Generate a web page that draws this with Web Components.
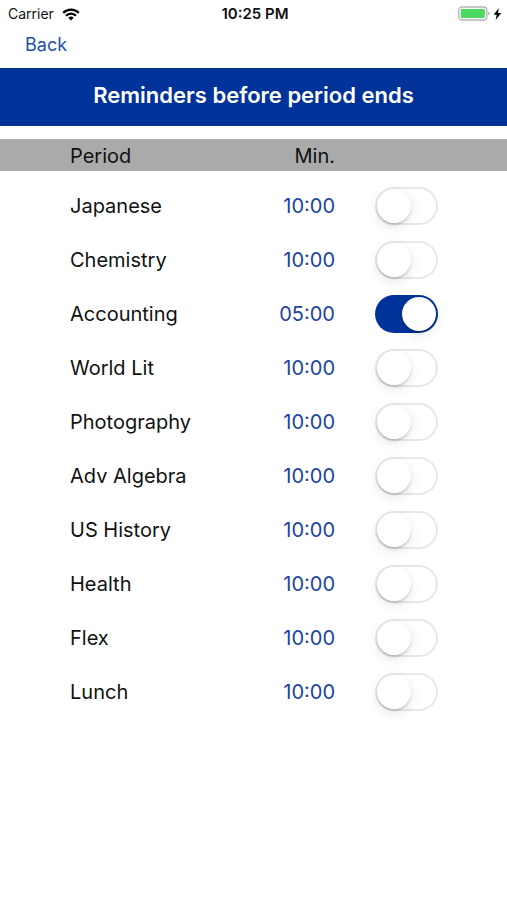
<!DOCTYPE html>
<html lang="en">
<head>
<meta charset="utf-8">
<meta name="viewport" content="width=device-width, initial-scale=1">
<title>Reminders</title>
<style>
    body{
        margin: 0;
        background: #fff;
        color: #111;
        font-family: Inter, "Liberation Sans", sans-serif;
        font-size: 20px;
        line-height: 24px;
        --brand: #003399;
    }
</style>
</head>
<body>
<reminders-page>
    <status-bar carrier="Carrier" time="10:25 PM"></status-bar>
    <nav-bar>Back</nav-bar>
    <page-banner>Reminders before period ends</page-banner>
    <reminder-table></reminder-table>
</reminders-page>

<script>
// fills a shadow root from a html string
function render(el, html){
    const template = document.createElement("template");
    template.innerHTML = html;
    el.attachShadow({mode: "open"});
    el.shadowRoot.appendChild(template.content.cloneNode(true));
}

//page shell
class RemindersPage extends HTMLElement {
    constructor(){
        super();
        render(this, `
        <style>
            :host{
                display: flex;
                flex-direction: column;
            }
        </style>
        <slot></slot>
        `);
    }
}

//carrier, clock and battery
class StatusBar extends HTMLElement {
    constructor(){
        super();
        render(this, `
        <style>
            :host{
                display: grid;
                grid-template-columns: 1fr auto 1fr;
                align-items: center;
                height: 28px;
                padding: 0 5px 0 8px;
                font-size: 14px;
                line-height: 16px;
            }
            .left, .right{
                display: flex;
                align-items: center;
                gap: 8px;
            }
            .right{
                justify-content: flex-end;
                gap: 3px;
            }
            .time{
                font-size: 15px;
                font-weight: 600;
            }
            svg{
                display: block;
            }
        </style>
        <div class="left">
            <span class="carrier"></span>
            <svg width="18" height="13" viewBox="0 0 18 13" aria-hidden="true">
                <g fill="none" stroke="#000" stroke-width="2.3">
                    <path d="M1.2 4.9C5.6 .5 12.4 .5 16.8 4.9"/>
                    <path d="M4 7.8C6.9 4.9 11.1 4.9 14 7.8"/>
                </g>
                <path d="M6.3 9.7C7.9 8.2 10.1 8.2 11.7 9.7L9 12.5Z"/>
            </svg>
        </div>
        <span class="time"></span>
        <div class="right">
            <svg width="32" height="16" viewBox="0 0 32 16" aria-hidden="true">
                <rect x=".8" y="1" width="28" height="13" rx="3" fill="#fff" stroke="#b5b5b5" stroke-width="1.3"/>
                <rect x="2.8" y="3" width="24" height="9" rx="1" fill="#4cd964"/>
                <path d="M30.2 5.4Q31.6 6 31.6 7.4T30.2 9.4Z" fill="#aaa"/>
            </svg>
            <svg width="9" height="13" viewBox="0 0 9 13" aria-hidden="true">
                <path d="M5.8 .1L.7 6.8H3.7L2.6 12.1L8.3 5H5Z"/>
            </svg>
        </div>
        `);
    }
    connectedCallback(){
        this.shadowRoot.querySelector(".carrier").textContent = this.getAttribute("carrier");
        this.shadowRoot.querySelector(".time").textContent = this.getAttribute("time");
    }
}

//back link
class NavBar extends HTMLElement {
    constructor(){
        super();
        render(this, `
        <style>
            :host{
                display: flex;
                align-items: center;
                height: 40px;
                padding: 0 25px 7px;
                box-sizing: border-box;
                font-size: 18px;
            }
            button{
                margin: 0;
                padding: 0;
                border: 0;
                background: none;
                color: #1f4fa8;
                font: inherit;
                cursor: pointer;
            }
        </style>
        <button type="button"><slot></slot></button>
        `);
    }
}

//blue title strip
class PageBanner extends HTMLElement {
    constructor(){
        super();
        render(this, `
        <style>
            :host{
                display: block;
                padding: 15px 16px 19px;
                background: var(--brand);
                color: #fff;
                text-align: center;
            }
            h1{
                margin: 0;
                font-size: 22px;
                line-height: 24px;
                font-weight: 600;
            }
        </style>
        <h1><slot></slot></h1>
        `);
    }
}

//on/off switch
class ToggleSwitch extends HTMLElement {
    constructor(){
        super();
        render(this, `
        <style>
            :host{
                display: block;
            }
            input{
                appearance: none;
                display: flex;
                width: 63px;
                height: 38px;
                margin: 0;
                padding: 2px;
                box-sizing: border-box;
                border-radius: 19px;
                background: #fff;
                box-shadow: inset 0 0 0 2px #e8e8e8;
                cursor: pointer;
            }
            input::before{
                content: "";
                width: 34px;
                height: 34px;
                border-radius: 50%;
                background: #fff;
                box-shadow: 0 2px 2px rgba(0, 0, 0, .14), 0 4px 12px rgba(0, 0, 0, .1);
            }
            input:checked{
                justify-content: flex-end;
                background: var(--brand);
                box-shadow: none;
            }
        </style>
        <input type="checkbox" role="switch">
        `);
    }
    connectedCallback(){
        const input = this.shadowRoot.querySelector("input");
        input.checked = this.hasAttribute("checked");
        input.setAttribute("aria-label", this.getAttribute("label"));
    }
}

const periods = [
    {name: "Japanese", min: "10:00"},
    {name: "Chemistry", min: "10:00"},
    {name: "Accounting", min: "05:00", on: true},
    {name: "World Lit", min: "10:00"},
    {name: "Photography", min: "10:00"},
    {name: "Adv Algebra", min: "10:00"},
    {name: "US History", min: "10:00"},
    {name: "Health", min: "10:00"},
    {name: "Flex", min: "10:00"},
    {name: "Lunch", min: "10:00"}
];

//list of periods
class ReminderTable extends HTMLElement {
    constructor(){
        super();
        render(this, `
        <style>
            :host{
                display: block;
                padding-top: 13px;
            }
            table{
                width: 100%;
                border-spacing: 0;
            }
            th, td{
                padding: 0;
                font-weight: 400;
                text-align: left;
            }
            thead th{
                height: 30px;
                padding-top: 2px;
                background: #aaa;
            }
            /* space between the header and the first row */
            tbody::before{
                content: "";
                display: block;
                height: 8px;
            }
            tbody tr{
                height: 54px;
            }
            .name{
                padding-left: 70px;
            }
            .min{
                text-align: right;
            }
            .switch{
                width: 63px;
                padding-left: 40px;
                padding-right: 69px;
            }
            button{
                padding: 0;
                border: 0;
                background: none;
                color: #1a44a0;
                font: inherit;
                cursor: pointer;
            }
        </style>
        <table>
            <thead>
                <tr>
                    <th class="name" scope="col">Period</th>
                    <th class="min" scope="col">Min.</th>
                    <th class="switch"></th>
                </tr>
            </thead>
            <tbody>
                ${periods.map(p => `
                <tr>
                    <th class="name" scope="row">${p.name}</th>
                    <td class="min"><button type="button">${p.min}</button></td>
                    <td class="switch"><toggle-switch label="${p.name}" ${p.on ? "checked" : ""}></toggle-switch></td>
                </tr>`).join("")}
            </tbody>
        </table>
        `);
    }
}

customElements.define('reminders-page', RemindersPage);
customElements.define('status-bar', StatusBar);
customElements.define('nav-bar', NavBar);
customElements.define('page-banner', PageBanner);
customElements.define('toggle-switch', ToggleSwitch);
customElements.define('reminder-table', ReminderTable);
</script>
</body>
</html>
